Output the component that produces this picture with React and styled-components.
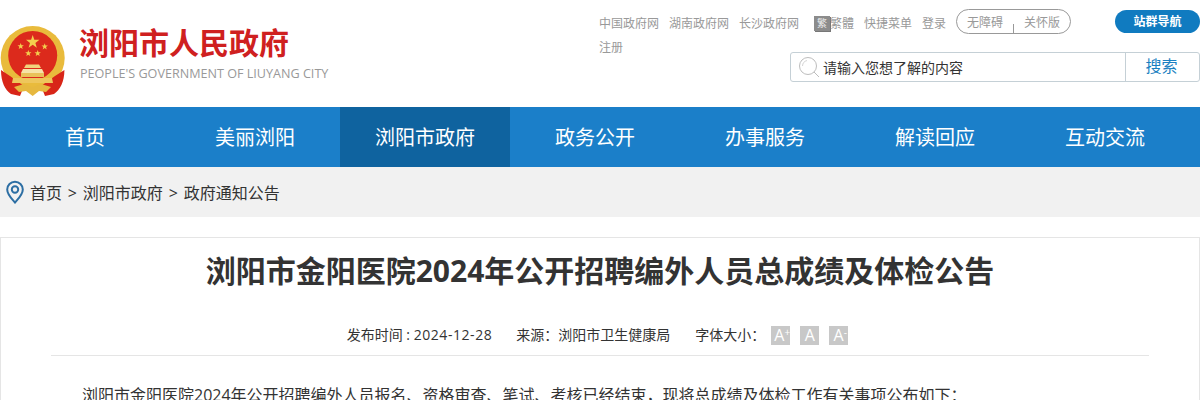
import React from "react";
import styled, { createGlobalStyle } from "styled-components";

const Global = createGlobalStyle`
  html, body { margin: 0; padding: 0; background: #fff; }
  body { font-family: "Open Sans", "Noto Sans CJK SC", sans-serif; color: #333; overflow: hidden; }
  * { box-sizing: border-box; }
`;
const Page = styled.div`width: 1200px; height: 400px; overflow: hidden;`;
const Header = styled.header`height: 107px; display: flex; justify-content: space-between;`;
const Brand = styled.div`display: flex; align-items: flex-start; padding-top: 26px; gap: 15px;`;
const BrandText = styled.div`display: flex; flex-direction: column; margin-top: -2px;`;
const BrandName = styled.div`font-size: 30px; line-height: 38px; font-weight: 700; color: #cf2020; white-space: nowrap; margin-left: -1px;`;
const BrandSub = styled.div`font-size: 12.6px; line-height: 16px; margin-top: 4px; color: #999; white-space: nowrap;`;
const Tools = styled.div`width: 600px; display: flex; flex-direction: column; padding-top: 9px;`;
const ToolRow = styled.div`display: flex; align-items: flex-start; height: 32px;`;
const LinkList = styled.div`width: 356px; display: flex; height: 28px; align-items: center; font-size: 12px; color: #999; white-space: nowrap;`;
const TopLink = styled.span`margin-right: ${p => p.$gap ?? 10}px; &:first-child { margin-left: -1px; }`;
const TradIcon = styled.span`width: 16px; height: 15px; margin-left: 10px; background: #8c8c8c; color: #eee; font-size: 10px; line-height: 15px; text-align: center; box-shadow: 1px 1px 0 #777;`;
const Pill = styled.div`width: 115px; height: 25px; border: 1px solid #999; border-radius: 13px; display: flex; align-items: center; justify-content: space-between; padding: 0 10px; font-size: 12px; color: #999; position: relative;`;
const PillTick = styled.i`position: absolute; left: 56px; bottom: 0; width: 1px; height: 9px; background: #999;`;
const NavButton = styled.div`width: 85px; height: 23px; margin-left: 44px; margin-top: 1px; border-radius: 12px; background: #107bc0; color: #fff; font-size: 12px; font-weight: 700; line-height: 23px; text-align: center;`;
const SecondRow = styled.div`display: flex; align-items: flex-start;`;
const Register = styled.div`width: 190px; font-size: 12px; line-height: 14px; color: #999; margin-left: -1px;`;
const Search = styled.div`width: 410px; height: 30px; margin-top: 11px; margin-left: 1px; border: 1px solid #c5d0d6; border-radius: 3px; display: flex; align-items: center;`;
const SearchField = styled.div`flex: 1; display: flex; align-items: center; gap: 2px; padding-left: 7px; font-size: 14px; color: #333;`;
const SearchBtn = styled.div`width: 74px; height: 100%; border-left: 1px solid #c5d0d6; color: #1a7fc1; font-size: 16px; line-height: 27px; padding-right: 2px; text-align: center;`;
const Nav = styled.nav`height: 60px; background: #1b7fc9; display: flex;`;
const NavItem = styled.div`width: 170px; height: 60px; line-height: 61px; text-align: center; font-size: 20px; color: #fff; background: ${p => p.$active ? "#0f639f" : "transparent"};`;
const Crumbs = styled.div`height: 50px; background: #f1f1f1; display: flex; align-items: center; padding-left: 6px; font-size: 16px; color: #333;`;
const CrumbText = styled.span`margin-left: 6px; white-space: pre; word-spacing: 1.7px;`;
const Article = styled.article`margin-top: 20px; border: 1px solid #e5e5e5; border-bottom: 0; height: 200px; padding: 0 50px;`;
const Title = styled.h1`margin: 0; padding-top: 11px; font-size: 30px; line-height: 44px; font-weight: 700; color: #333; text-align: center;`;
const Meta = styled.div`margin-top: 27px; height: 36px; padding: 0 5px 8px 0; border-bottom: 1px solid #e5e5e5; display: flex; align-items: center; justify-content: center; font-size: 14px; color: #333; white-space: nowrap;`;
const MetaItem = styled.span`margin-right: ${p => p.$gap}px;`;
const DateText = styled.span`letter-spacing: 0.55px;`;
const SizeBtn = styled.span`width: 19px; height: 19px; margin-top: 4px; margin-left: ${p => p.$gap ?? 10}px; background: #c8c8c8; color: #fff; font-size: 16px; line-height: 19px; text-align: center; sup { font-size: 10px; line-height: 0; vertical-align: 5px; margin-right: -3px; }`;
const Body = styled.p`margin: 27px 0 0; padding-left: 31px; font-size: 16px; line-height: 24px; color: #333; white-space: nowrap;`;

const star = (cx, cy, r) => Array.from({ length: 10 }, (_, i) => {
  const a = -Math.PI / 2 + (i * Math.PI) / 5;
  const d = i % 2 ? r * 0.4 : r;
  return `${(cx + d * Math.cos(a)).toFixed(1)},${(cy + d * Math.sin(a)).toFixed(1)}`;
}).join(" ");

const Emblem = () => (
  <svg width="65" height="71" viewBox="0 0 65 71">
    <circle cx="32.7" cy="32" r="32" fill="#e9bb3c" />
    <circle cx="32.7" cy="29.5" r="24.5" fill="#dc2a1c" />
    <path d="M1 44 C1 56 5 64 11 68 L20 70 L24 60 L10 50Z M64.4 44 C64.4 56 60 64 54 68 L45 70 L41 60 L55 50Z" fill="#d82518" />
    <path d="M14 61 L24 58 L32.7 61 L41 58 L51 61 L46 66 L39 65 L32.7 70 L26 65 L19 66Z" fill="#e6b83f" />
    <path d="M13 52 H52 L53 57 H12Z" fill="#eec65c" />
    <path d="M21 47 H44 V51 H21Z" fill="#e9c15a" />
    <path d="M23 43 H42 L44 47 H21Z" fill="#f6e3a8" />
    <path d="M26 38.5 H39 L41 42 H24Z" fill="#f1d37d" />
    <polygon fill="#f3cf4e" points={star(32.7, 16, 7)} />
    <polygon fill="#f3cf4e" points={star(20.7, 20.3, 3.4)} />
    <polygon fill="#f3cf4e" points={star(44.7, 20.7, 3.4)} />
    <polygon fill="#f3cf4e" points={star(28.3, 27.3, 3.4)} />
    <polygon fill="#f3cf4e" points={star(37.7, 27.3, 3.4)} />
  </svg>
);

const Magnifier = () => (
  <svg width="23" height="22" viewBox="0 0 23 22" fill="none" stroke="#bdbdbd" strokeWidth="1">
    <circle cx="10" cy="10" r="8.5" />
    <path d="M4.5 10 A6 6 0 0 1 9 4.5" stroke="#d5d5d5" />
    <path d="M16 16 L21 21" />
  </svg>
);

const Pin = () => (
  <svg width="18" height="24" viewBox="0 0 18 24" fill="none" stroke="#2c6ea3" strokeWidth="2">
    <path d="M9 22.5 C5 18 1.2 14.5 1.2 9.5 A7.8 7.8 0 0 1 16.8 9.5 C16.8 14.5 13 18 9 22.5Z" />
    <circle cx="9" cy="9.5" r="3.2" />
  </svg>
);

const navItems = ["首页", "美丽浏阳", "浏阳市政府", "政务公开", "办事服务", "解读回应", "互动交流"];

export default function App() {
  return (
    <Page>
      <Global />
      <Header>
        <Brand>
          <Emblem />
          <BrandText>
            <BrandName>浏阳市人民政府</BrandName>
            <BrandSub>PEOPLE'S GOVERNMENT OF LIUYANG CITY</BrandSub>
          </BrandText>
        </Brand>
        <Tools>
          <ToolRow>
            <LinkList>
              <TopLink>中国政府网</TopLink>
              <TopLink>湖南政府网</TopLink>
              <TopLink $gap={5}>长沙政府网</TopLink>
              <TradIcon>繁</TradIcon>
              <TopLink>繁體</TopLink>
              <TopLink>快捷菜单</TopLink>
              <TopLink>登录</TopLink>
            </LinkList>
            <Pill>
              <span>无障碍</span>
              <PillTick />
              <span>关怀版</span>
            </Pill>
            <NavButton>站群导航</NavButton>
          </ToolRow>
          <SecondRow>
            <Register>注册</Register>
            <Search>
              <SearchField><Magnifier />请输入您想了解的内容</SearchField>
              <SearchBtn>搜索</SearchBtn>
            </Search>
          </SecondRow>
        </Tools>
      </Header>
      <Nav>
        {navItems.map((n, i) => <NavItem key={n} $active={i === 2}>{n}</NavItem>)}
      </Nav>
      <Crumbs>
        <Pin />
        <CrumbText>首页 &gt; 浏阳市政府 &gt; 政府通知公告</CrumbText>
      </Crumbs>
      <Article>
        <Title>浏阳市金阳医院2024年公开招聘编外人员总成绩及体检公告</Title>
        <Meta>
          <MetaItem $gap={24}>发布时间 : <DateText>2024-12-28</DateText></MetaItem>
          <MetaItem $gap={25}>来源：浏阳市卫生健康局</MetaItem>
          <MetaItem $gap={6}>字体大小：</MetaItem>
          <SizeBtn $gap={0}>A<sup>+</sup></SizeBtn>
          <SizeBtn>A</SizeBtn>
          <SizeBtn>A<sup>-</sup></SizeBtn>
        </Meta>
        <Body>浏阳市金阳医院2024年公开招聘编外人员报名、资格审查、笔试、考核已经结束，现将总成绩及体检工作有关事项公布如下：</Body>
      </Article>
    </Page>
  );
}
